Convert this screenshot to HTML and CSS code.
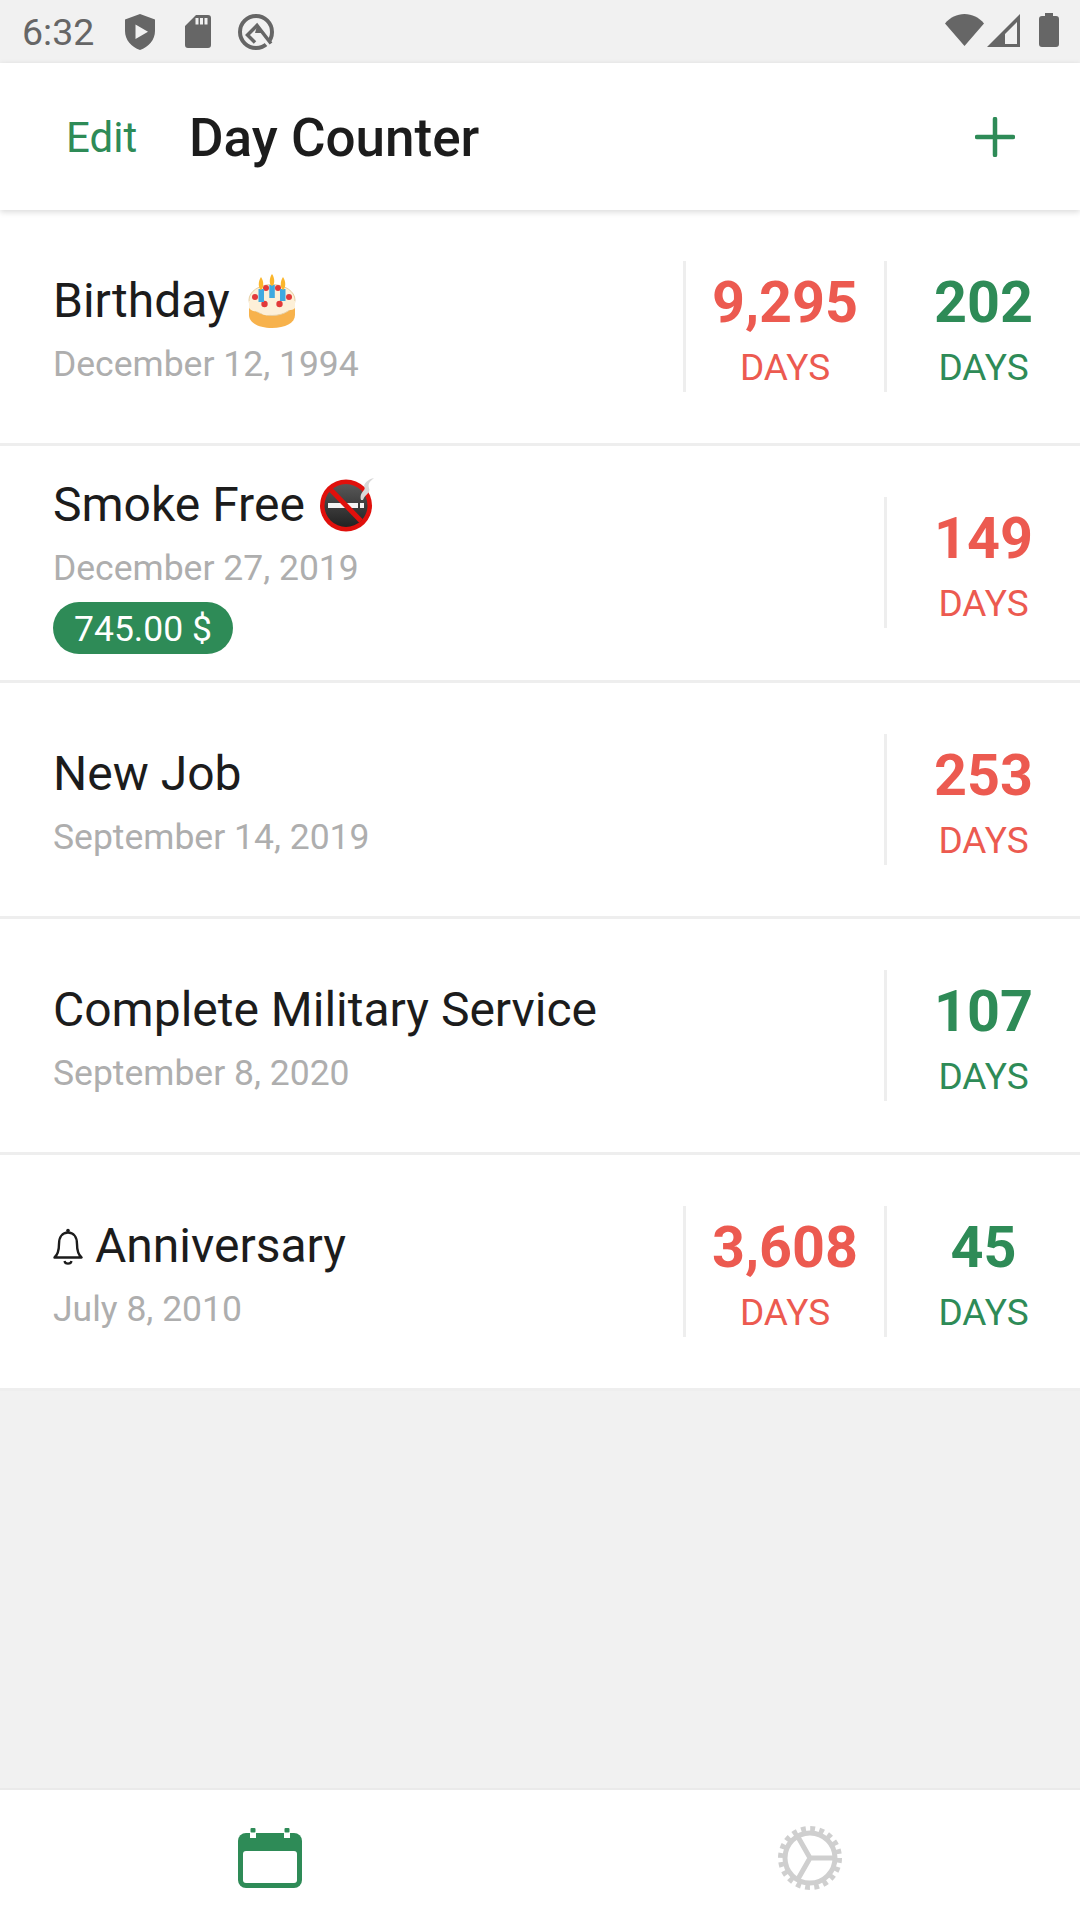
FILE: index.html
```html
<!DOCTYPE html>
<html lang="en">
<head>
    <meta charset="UTF-8">
    <meta name="viewport" content="width=device-width, initial-scale=1.0">
    <title>Day Counter</title>
    <link rel="stylesheet" href="styles.css">
</head>
<body>
    <div class="status">
        <span class="time">6:32</span>
        <svg class="s-shield" viewBox="0 0 30 36"><path fill="#666" fill-rule="evenodd" d="M15 0 30 5.500V17C30 26 23.500 33 15 36 6.500 33 0 26 0 17V5.500ZM10.500 10.500V25L23 17.800Z"/></svg>
        <svg class="s-sd" viewBox="0 0 26 33"><path fill="#666" fill-rule="evenodd" d="M11 0H23Q26 0 26 3V30Q26 33 23 33H3Q0 33 0 30V11ZM10.500 3V9.500H13.500V3ZM15 3V9.500H18V3ZM19.500 3V9.500H22.500V3Z"/></svg>
        <svg class="s-q" viewBox="0 0 36 36" fill="none">
            <circle cx="18" cy="18" r="16" stroke="#666" stroke-width="4"/>
            <path stroke="#f1f1f1" stroke-width="6" d="M27 25 37 36"/>
            <path stroke="#666" stroke-width="3.500" d="M17 28.500 9.500 21 19 11.500 33 29.500"/>
            <path fill="#666" d="M19 12 24 19 17 19Z"/>
        </svg>
        <span class="status-gap"></span>
        <svg class="s-wifi" viewBox="0 0 39 32"><path fill="#666" d="M19.500 32 0 9.500C5 3.500 12 0 19.500 0S34 3.500 39 9.500Z"/></svg>
        <svg class="s-signal" viewBox="0 0 33 33"><path fill="#666" fill-rule="evenodd" d="M33 0V33H0ZM30 8 18 20V30H30Z"/></svg>
        <svg class="s-batt" viewBox="0 0 20 34"><path fill="#666" d="M6 0H14V3H17Q20 3 20 6V31Q20 34 17 34H3Q0 34 0 31V6Q0 3 3 3H6Z"/></svg>
    </div>

    <div class="topbar">
        <span class="edit">Edit</span>
        <span class="app-title">Day Counter</span>
        <svg class="plus" viewBox="0 0 40 40"><path fill="none" stroke="#2e8b57" stroke-width="4.500" stroke-linecap="round" d="M20 2V38M2 20H38"/></svg>
    </div>

    <div class="list">
        <div class="row">
            <div class="info">
                <div class="name">Birthday
                    <svg class="emoji cake" viewBox="0 0 48 54">
                        <path fill="#f7b24c" d="M1 30V41C1 49 11 54 24 54S47 49 47 41V30Z"/>
                        <ellipse cx="24" cy="26" rx="23" ry="15.500" fill="#fdf0d8" stroke="#e6cfa4"/>
                        <path fill="#fdf0d8" d="M1 27V34C5 39 9 36 13 39S20 42 24 39 32 42 36 38 43 38 47 34V27Z"/>
                        <circle cx="7" cy="23" r="3" fill="#e23a3a"/><circle cx="41" cy="23" r="3" fill="#e23a3a"/>
                        <circle cx="16.500" cy="30" r="3.200" fill="#e23a3a"/><circle cx="31.500" cy="30" r="3.200" fill="#e23a3a"/>
                        <circle cx="18" cy="14" r="3" fill="#e23a3a"/><circle cx="30" cy="14" r="3" fill="#e23a3a"/>
                        <rect x="10.500" y="15" width="5.500" height="13" fill="#3fa9e0"/><rect x="21.300" y="11" width="5.500" height="13" fill="#3fa9e0"/><rect x="32" y="15" width="5.500" height="12" fill="#3fa9e0"/>
                        <path fill="#fbb62c" d="M13 3C16 7 16 14 13 16 10 14 10 7 13 3ZM24 0C27 4 27 11 24 12 21 11 21 4 24 0ZM35 3C38 7 38 14 35 16 32 14 32 7 35 3Z"/>
                    </svg>
                </div>
                <div class="date">December 12, 1994</div>
            </div>
            <div class="count first red"><span class="num">9,295</span><span class="unit">DAYS</span></div>
            <div class="count green"><span class="num">202</span><span class="unit">DAYS</span></div>
        </div>

        <div class="row">
            <div class="info">
                <div class="name">Smoke Free
                    <svg class="emoji nosmoke" viewBox="0 0 54 54">
                        <defs>
                            <linearGradient id="smokeDark" x1="0" y1="0" x2="0" y2="1">
                                <stop offset="0" stop-color="#585858"/>
                                <stop offset="1" stop-color="#222"/>
                            </linearGradient>
                        </defs>
                        <circle cx="26" cy="27.500" r="26" fill="#e0100c"/>
                        <circle cx="26" cy="27.500" r="21.500" fill="url(#smokeDark)"/>
                        <rect x="8" y="25" width="30" height="5" fill="#f4f4f4"/>
                        <rect x="40" y="25" width="4" height="5" fill="#f4f4f4"/>
                        <path fill="none" stroke="#e0100c" stroke-width="5" d="M11 12 41 43"/>
                        <path fill="#d8d8d8" d="M41 22C39 13 47 13 44 8 45 4 49 1 54 0 49 4 48 6 49 10 51 15 45 16 43 22Z"/>
                    </svg>
                </div>
                <div class="date">December 27, 2019</div>
                <div class="pill">745.00 $</div>
            </div>
            <div class="count red"><span class="num">149</span><span class="unit">DAYS</span></div>
        </div>

        <div class="row">
            <div class="info">
                <div class="name">New Job</div>
                <div class="date">September 14, 2019</div>
            </div>
            <div class="count red"><span class="num">253</span><span class="unit">DAYS</span></div>
        </div>

        <div class="row">
            <div class="info">
                <div class="name">Complete Military Service</div>
                <div class="date">September 8, 2020</div>
            </div>
            <div class="count green"><span class="num">107</span><span class="unit">DAYS</span></div>
        </div>

        <div class="row">
            <div class="info">
                <div class="name">
                    <svg class="bell" viewBox="0 0 30 37"><path fill="none" stroke="#1c1c1c" stroke-width="2.400" stroke-linejoin="round" d="M1.500 29.500C5.500 26 6 22 6 16 6 9 9.500 4.500 15 4.500S24 9 24 16C24 22 24.500 26 28.500 29.500Z"/><circle cx="15" cy="2.600" r="1.800" fill="#1c1c1c"/><path fill="none" stroke="#1c1c1c" stroke-width="2.200" d="M11.500 33C12 36.500 18 36.500 18.500 33"/></svg>Anniversary
                </div>
                <div class="date">July 8, 2010</div>
            </div>
            <div class="count first red"><span class="num">3,608</span><span class="unit">DAYS</span></div>
            <div class="count green"><span class="num">45</span><span class="unit">DAYS</span></div>
        </div>
    </div>

    <div class="tabs">
        <div class="tab">
            <svg class="cal" viewBox="0 0 64 60">
                <rect x="0" y="5" width="64" height="55" rx="8" fill="#2e8b57"/>
                <rect x="5" y="23" width="54" height="32" rx="3" fill="#fff"/>
                <rect x="12" y="4" width="6" height="6" fill="#fff"/>
                <rect x="46" y="4" width="6" height="6" fill="#fff"/>
                <rect x="12.500" y="0" width="5" height="4.500" rx="1" fill="#2e8b57"/>
                <rect x="46.500" y="0" width="5" height="4.500" rx="1" fill="#2e8b57"/>
            </svg>
        </div>
        <div class="tab">
            <svg class="gear" viewBox="0 0 64 64" fill="none" stroke="#cfcfcf">
                <circle cx="32" cy="32" r="25" stroke-width="5"/>
                <circle cx="32" cy="32" r="28.500" stroke-width="7" stroke-dasharray="4.700 4.253"/>
                <path stroke-width="5" d="M32 32H56M32 32 20 11M32 32 20 53"/>
            </svg>
        </div>
    </div>
</body>
</html>
```
FILE: styles.css
```css
* {
    margin: 0;
    padding: 0;
    box-sizing: border-box;
}
body {
    width: 1080px;
    height: 1920px;
    display: flex;
    flex-direction: column;
    background-color: #f1f1f1;
    font-family: Roboto, "Liberation Sans", sans-serif;
}

/* status bar */
.status {
    height: 63px;
    display: flex;
    align-items: center;
    padding-left: 22px;
    color: #666;
}
.time {
    font-size: 37.5px;
    width: 103px;
    margin-top: 1px;
}
.status svg {
    display: block;
}
.s-shield {
    width: 30px;
    height: 36px;
}
.s-sd {
    width: 26px;
    height: 33px;
    margin-left: 30px;
}
.s-q {
    width: 36px;
    height: 36px;
    margin-left: 27px;
}
.status-gap {
    flex: 1;
}
.s-wifi {
    width: 39px;
    height: 32px;
    margin-top: -3px;
}
.s-signal {
    width: 33px;
    height: 33px;
    margin-left: 3px;
    margin-top: -3px;
}
.s-batt {
    width: 20px;
    height: 34px;
    margin-left: 19px;
    margin-right: 21px;
    margin-top: -3px;
}

/* top bar */
.topbar {
    height: 147px;
    display: flex;
    align-items: center;
    padding-left: 66px;
    background-color: #fff;
    box-shadow: 0 2px 6px rgba(0, 0, 0, 0.15);
    position: relative;
}
.edit {
    font-size: 42px;
    color: #2e8b57;
    width: 123px;
    margin-top: 2px;
}
.app-title {
    flex: 1;
    font-size: 53px;
    font-weight: 500;
    color: #1c1c1c;
    margin-top: 2px;
}
.plus {
    width: 40px;
    height: 40px;
    margin-right: 65px;
}

/* list */
.list {
    flex: 1;
}
.row {
    height: 236.3px;
    display: flex;
    align-items: center;
    padding-left: 53px;
    background-color: #fff;
    border-bottom: 3px solid #eee;
}
.info {
    flex: 1;
    padding-top: 3px;
}
.name {
    font-size: 48px;
    line-height: 62px;
    color: #1c1c1c;
    display: flex;
    align-items: center;
    gap: 13px;
}
.date {
    font-size: 35.5px;
    line-height: 44px;
    margin-top: 10px;
    color: #aeaeae;
}
.pill {
    display: inline-block;
    height: 52px;
    line-height: 55px;
    padding: 0 21px;
    border-radius: 26px;
    margin-top: 12px;
    font-size: 35.5px;
    color: #fff;
    background-color: #2e8b57;
}
.emoji {
    display: block;
}
.cake {
    width: 48px;
    height: 54px;
    margin-left: 5px;
}
.nosmoke {
    width: 54px;
    height: 54px;
    margin-left: 2px;
}
.bell {
    width: 30px;
    height: 37px;
    display: block;
    margin-right: -1px;
}

.count {
    width: 196px;
    height: 131px;
    display: flex;
    flex-direction: column;
    align-items: center;
    border-left: 3px solid #eee;
}
.count.first {
    width: 201px;
}
.num {
    font-size: 57.5px;
    font-weight: 700;
    line-height: 84px;
}
.unit {
    font-size: 37px;
    line-height: 45px;
}
.red {
    color: #ec5a50;
}
.green {
    color: #2e8b57;
}

/* bottom tabs */
.tabs {
    height: 132px;
    display: flex;
    background-color: #fff;
    border-top: 2px solid #eaeaea;
}
.tab {
    flex: 1;
    display: flex;
    align-items: center;
    justify-content: center;
    padding-top: 6px;
}
.cal {
    width: 64px;
    height: 60px;
}
.gear {
    width: 64px;
    height: 64px;
}
```
